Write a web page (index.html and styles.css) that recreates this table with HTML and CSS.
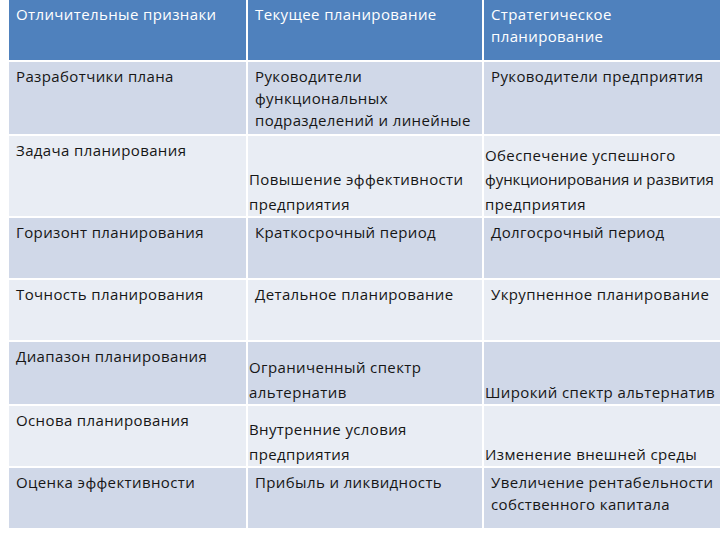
FILE: index.html
```html
<!DOCTYPE html>
<html lang="ru">
<head>
<meta charset="utf-8">
<title>Текущее и стратегическое планирование</title>
<link rel="stylesheet" href="styles.css">
</head>
<body>
<div class="table">
  <div class="cell head">Отличительные признаки</div>
  <div class="cell head">Текущее планирование</div>
  <div class="cell head">Стратегическое<br>планирование</div>

  <div class="cell dark">Разработчики плана</div>
  <div class="cell dark">Руководители<br>функциональных<br>подразделений и линейные</div>
  <div class="cell dark">Руководители предприятия</div>

  <div class="cell light">Задача планирования</div>
  <div class="cell light bottom"><div>Повышение эффективности<br>предприятия</div></div>
  <div class="cell light bottom"><div>Обеспечение успешного<br><span class="tight">функционирования и развития</span><br>предприятия</div></div>

  <div class="cell dark">Горизонт планирования</div>
  <div class="cell dark">Краткосрочный период</div>
  <div class="cell dark">Долгосрочный период</div>

  <div class="cell light">Точность планирования</div>
  <div class="cell light">Детальное планирование</div>
  <div class="cell light">Укрупненное планирование</div>

  <div class="cell dark">Диапазон планирования</div>
  <div class="cell dark bottom"><div>Ограниченный спектр<br>альтернатив</div></div>
  <div class="cell dark bottom"><div>Широкий спектр альтернатив</div></div>

  <div class="cell light">Основа планирования</div>
  <div class="cell light bottom"><div>Внутренние условия<br>предприятия</div></div>
  <div class="cell light bottom"><div>Изменение внешней среды</div></div>

  <div class="cell dark">Оценка эффективности</div>
  <div class="cell dark">Прибыль и ликвидность</div>
  <div class="cell dark">Увеличение рентабельности<br>собственного капитала</div>
</div>
</body>
</html>
```
FILE: styles.css
```css
html, body {
  margin: 0;
  padding: 0;
  background: #ffffff;
  overflow: hidden;
}
body {
  width: 720px;
  height: 540px;
  font-family: "Open Sans", "DejaVu Sans", sans-serif;
  font-size: 15px;
  letter-spacing: 0.38px;
  color: #161616;
}
.table {
  margin-left: 9px;
  width: 730px;
  display: grid;
  grid-template-columns: 237px 234px 255px;
  grid-template-rows: 60px 72px 80px 60px 60px 62px 60px 60px;
  column-gap: 2px;
  row-gap: 2px;
  background: #ffffff;
}
.cell {
  padding: 3px 4px 0 7px;
  line-height: 22px;
  white-space: nowrap;
  overflow: hidden;
}
.head {
  background: #4f81bd;
  color: #ffffff;
}
.dark {
  background: #d0d8e8;
}
.light {
  background: #e9edf4;
}
.bottom {
  display: flex;
  flex-direction: column;
  justify-content: flex-end;
  padding-left: 1px;
  padding-bottom: 0;
  line-height: 24.5px;
}
.tight {
  letter-spacing: -0.05px;
}
```
